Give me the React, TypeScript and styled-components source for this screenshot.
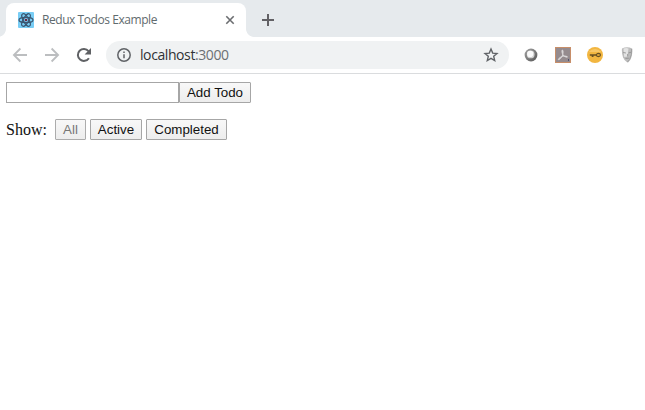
import React from 'react';
import styled, { createGlobalStyle } from 'styled-components';

const GlobalStyle = createGlobalStyle`
  * { box-sizing: border-box; }
  html, body { margin: 0; padding: 0; background: #fff; overflow: hidden; }
`;

const Browser = styled.div`
  width: 645px;
  height: 410px;
  display: flex;
  flex-direction: column;
  background: #fff;
  overflow: hidden;
`;

const TabStrip = styled.div`
  flex: none;
  height: 37px;
  display: flex;
  align-items: flex-end;
  padding-left: 6px;
  background: #e6eaed;
`;

const Tab = styled.div`
  position: relative;
  width: 240px;
  height: 34px;
  display: flex;
  align-items: center;
  padding: 0 10px 0 12px;
  border-radius: 8px 8px 0 0;
  background: #fff;

  &::before,
  &::after {
    content: '';
    position: absolute;
    bottom: 0;
    width: 8px;
    height: 8px;
  }
  &::before {
    left: -8px;
    background: radial-gradient(circle at 0 0, transparent 7.5px, #fff 8.2px);
  }
  &::after {
    right: -8px;
    background: radial-gradient(circle at 100% 0, transparent 7.5px, #fff 8.2px);
  }
`;

const TabTitle = styled.span`
  flex: 1;
  margin-left: 8px;
  font: 12px/16px 'Open Sans', sans-serif;
  letter-spacing: -0.44px;
  white-space: nowrap;
  color: #5f6b6e;
`;

const NewTab = styled.div`
  display: flex;
  margin: 0 0 10px 15px;
`;

const Toolbar = styled.div`
  flex: none;
  height: 37px;
  display: flex;
  align-items: center;
  padding: 0 10px 1px 12px;
  border-bottom: 1px solid #dadcde;
`;

const NavIcons = styled.div`
  display: flex;
  gap: 16px;
  width: 94px;
`;

const AddressBar = styled.div`
  width: 403px;
  height: 28px;
  display: flex;
  align-items: center;
  padding: 0 10px;
  border-radius: 14px;
  background: #f0f2f3;
`;

const Address = styled.span`
  flex: 1;
  margin-left: 8px;
  font: 14px/20px 'Open Sans', sans-serif;
  letter-spacing: -0.41px;
  color: #303336;
`;

const Port = styled.span`
  color: #6b7073;
`;

const Extensions = styled.div`
  display: flex;
  gap: 16px;
  margin-left: 14px;
`;

const Page = styled.main`
  display: flex;
  flex-direction: column;
  gap: 16px;
  padding: 8px 6px;
`;

const Row = styled.div`
  display: flex;
  height: 21px;
`;

const TodoInput = styled.input`
  width: 173px;
  height: 21px;
  padding: 1px;
  border: 1px solid #a6a6a6;
  border-radius: 0;
  outline: none;
  background: #fff;
`;

const Button = styled.button<{ $width: number }>`
  width: ${({ $width }) => $width}px;
  height: 21px;
  padding: 0;
  border: 1px solid #a6a6a6;
  border-radius: 1px;
  background: linear-gradient(#f8f8f8, #ededed);
  font: 13.33px/17px 'Liberation Sans', Arial, sans-serif;
  white-space: nowrap;
  color: #111;

  &:disabled { color: #777; border-color: #acacac; }
`;

const ShowLabel = styled.span`
  width: 49px;
  font: 16px/22px 'Liberation Serif', 'Times New Roman', serif;
  color: #111;
`;

const Filters = styled.div`
  display: flex;
  gap: 4px;
`;

const ReactLogo = () => (
  <svg width="16" height="16" viewBox="0 0 16 16">
    <rect width="16" height="16" rx="1" fill="#78cdf5" />
    <g fill="none" stroke="#3b5670" strokeWidth="1.2">
      <ellipse cx="8" cy="8" rx="7" ry="2.7" />
      <ellipse cx="8" cy="8" rx="7" ry="2.7" transform="rotate(60 8 8)" />
      <ellipse cx="8" cy="8" rx="7" ry="2.7" transform="rotate(120 8 8)" />
    </g>
    <circle cx="8" cy="8" r="1.3" fill="#6d2740" />
  </svg>
);

const CloseIcon = () => (
  <svg width="12" height="12" viewBox="0 0 12 12" stroke="#6b6d70" strokeWidth="1.6">
    <path d="M2.3 2.3l7.4 7.4M9.7 2.3l-7.4 7.4" />
  </svg>
);

const PlusIcon = () => (
  <svg width="14" height="14" viewBox="0 0 14 14" stroke="#626165" strokeWidth="2">
    <path d="M7 1v12M1 7h12" />
  </svg>
);

const Arrow = ({ forward = false }: { forward?: boolean }) => (
  <svg width="16" height="16" viewBox="0 0 16 16" fill="none" stroke="#bcbec0" strokeWidth="1.8">
    <path d={forward ? 'M1 8h13M7.6 1.5L14.1 8l-6.5 6.5' : 'M15 8H2M8.4 1.5L1.9 8l6.5 6.5'} />
  </svg>
);

const ReloadIcon = () => (
  <svg width="16" height="16" viewBox="0 0 16 16">
    <path d="M12.9 11.2A6 6 0 1 1 12.5 4.1" fill="none" stroke="#5f6164" strokeWidth="2" />
    <path d="M15 1v6.4H8.6z" fill="#5f6164" />
  </svg>
);

const InfoIcon = () => (
  <svg width="16" height="16" viewBox="0 0 16 16" fill="none" stroke="#606367" strokeWidth="1.5">
    <circle cx="8" cy="8" r="6.2" />
    <path d="M8 7.2v4M8 4.5v1.5" />
  </svg>
);

const StarIcon = () => (
  <svg width="16" height="16" viewBox="0 0 16 16" fill="none" stroke="#606367" strokeWidth="1.4">
    <path d="M8 2.1l1.7 4 4.3.4-3.3 2.8 1 4.2L8 11.3l-3.7 2.2 1-4.2L2 6.5l4.3-.4z" />
  </svg>
);

const RingExtension = () => (
  <svg width="16" height="16" viewBox="0 0 16 16">
    <defs>
      <linearGradient id="ring" x1="0" y1="0" x2="1" y2="1">
        <stop offset="0" stopColor="#a3a3a3" />
        <stop offset="1" stopColor="#555" />
      </linearGradient>
    </defs>
    <circle cx="8" cy="8" r="6.4" fill="url(#ring)" />
    <circle cx="7.7" cy="7.4" r="3.9" fill="#d0d0d0" />
    <circle cx="7.2" cy="6.9" r="3.1" fill="#fafafa" />
  </svg>
);

const PdfExtension = () => (
  <svg width="16" height="16" viewBox="0 0 16 16">
    <rect x=".5" y=".5" width="15" height="15" fill="#958b8e" stroke="#c78e69" />
    <path d="M7.3 3c1.2 0 .7 2.8.5 4.7-1.2 2.8-3.1 5.1-4.4 5-.6-.8 2.3-2.9 4.4-3.5 2.1-.4 4.8.1 4.7.9-.7.7-4-1-4.7-2.4C7.2 6.2 6.5 3.8 7.3 3z" fill="#d4d0d1" stroke="#dedbdc" strokeWidth=".9" />
    <path d="M13 13h1" stroke="#50506f" strokeWidth="2" />
  </svg>
);

const KeyExtension = () => (
  <svg width="16" height="16" viewBox="0 0 16 16">
    <circle cx="8" cy="8" r="8" fill="#f2b640" />
    <path d="M1.5 5Q8-1 14.5 5z" fill="#f8c767" />
    <path d="M2.8 7.2h7v1.5H6.5v1.2H4.7V8.7H2.8z" fill="#685022" />
    <ellipse cx="11.4" cy="8" rx="2.1" ry="1.6" fill="#d9a43c" stroke="#685022" strokeWidth="1.1" />
  </svg>
);

const MaskExtension = () => (
  <svg width="16" height="16" viewBox="0 0 16 16">
    <path d="M3 1.5Q8-1 13.2 1.5q.6 5-.9 8.9Q10.5 15 8.3 15.6 5.4 14 4 10.3 2.4 5 3 1.5z" fill="#bcbcbc" />
    <path d="M4.5 1.5q3-1.2 5 0L8.4 9.5 5.2 10z" fill="#e3e3e3" />
    <path d="M4.2 5.5l2.7.5M9.4 6l2.7-.8M6.4 11.4l3.5-.2M8.7 7v2.4" fill="none" stroke="#929292" strokeWidth=".9" />
    <path d="M12.6 2q.5 6-2 10.5L8.4 15" fill="none" stroke="#a0a0a0" />
  </svg>
);

export default function App() {
  return (
    <>
      <GlobalStyle />
      <Browser>
        <TabStrip>
          <Tab>
            <ReactLogo />
            <TabTitle>Redux Todos Example</TabTitle>
            <CloseIcon />
          </Tab>
          <NewTab><PlusIcon /></NewTab>
        </TabStrip>
        <Toolbar>
          <NavIcons>
            <Arrow />
            <Arrow forward />
            <ReloadIcon />
          </NavIcons>
          <AddressBar>
            <InfoIcon />
            <Address>localhost<Port>:3000</Port></Address>
            <StarIcon />
          </AddressBar>
          <Extensions>
            <RingExtension />
            <PdfExtension />
            <KeyExtension />
            <MaskExtension />
          </Extensions>
        </Toolbar>
        <Page>
          <Row>
            <TodoInput aria-label="New todo" />
            <Button $width={72}>Add Todo</Button>
          </Row>
          <Row>
            <ShowLabel>Show:</ShowLabel>
            <Filters>
              <Button $width={31} disabled>All</Button>
              <Button $width={52}>Active</Button>
              <Button $width={81}>Completed</Button>
            </Filters>
          </Row>
        </Page>
      </Browser>
    </>
  );
}
